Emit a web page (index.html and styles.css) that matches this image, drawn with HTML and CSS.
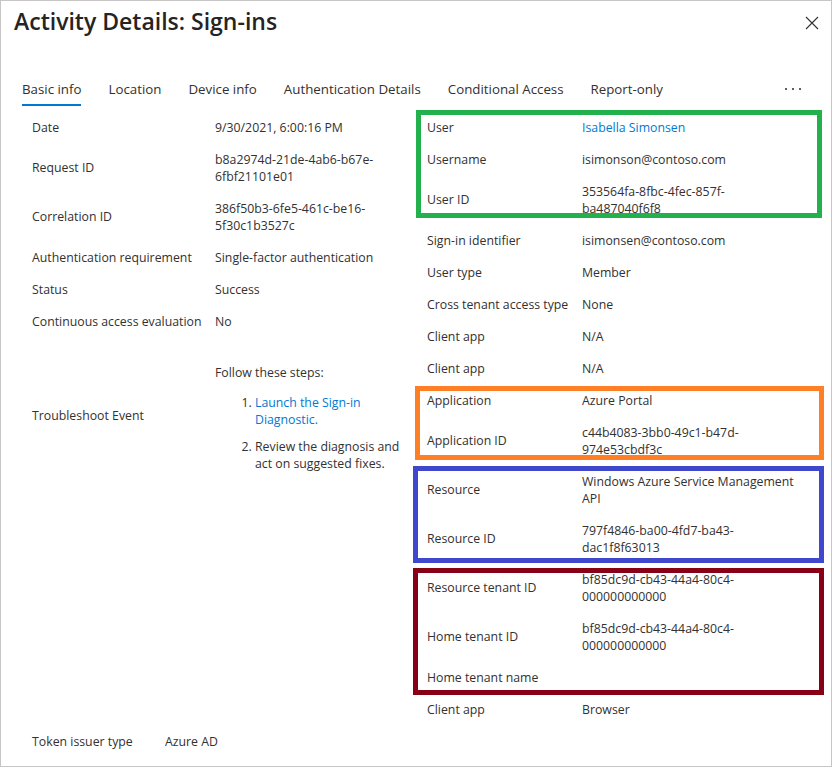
FILE: index.html
```html
<!DOCTYPE html>
<html>
<head>
<meta charset="utf-8">
<link rel="stylesheet" href="styles.css">
</head>
<body>
<div class="panel">
  <header class="header">
    <h1 class="title">Activity Details: Sign-ins</h1>
    <button class="close" aria-label="Close">
      <svg width="14" height="14" viewBox="0 0 14 14"><path d="M1 1L13 13M13 1L1 13" stroke="#323130" stroke-width="1.1" fill="none"/></svg>
    </button>
  </header>
  <nav class="tabs">
    <span class="tab active">Basic info</span>
    <span class="tab">Location</span>
    <span class="tab">Device info</span>
    <span class="tab">Authentication Details</span>
    <span class="tab">Conditional Access</span>
    <span class="tab">Report-only</span>
    <span class="more"><i></i><i></i><i></i></span>
  </nav>
  <div class="content">
    <div class="col left">
      <div class="row"><div class="label">Date</div><div class="value">9/30/2021, 6:00:16 PM</div></div>
      <div class="row"><div class="label">Request ID</div><div class="value">b8a2974d-21de-4ab6-b67e-<br>6fbf21101e01</div></div>
      <div class="row"><div class="label">Correlation ID</div><div class="value">386f50b3-6fe5-461c-be16-<br>5f30c1b3527c</div></div>
      <div class="row"><div class="label">Authentication requirement</div><div class="value">Single-factor authentication</div></div>
      <div class="row"><div class="label">Status</div><div class="value">Success</div></div>
      <div class="row"><div class="label">Continuous access evaluation</div><div class="value">No</div></div>
      <div class="row trouble">
        <div class="label">Troubleshoot Event</div>
        <div class="value">
          <p class="steps-intro">Follow these steps:</p>
          <ol class="steps">
            <li><a href="#" class="link">Launch the Sign-in<br>Diagnostic.</a></li>
            <li>Review the diagnosis and<br>act on suggested fixes.</li>
          </ol>
        </div>
      </div>
    </div>
    <div class="col right">
      <div class="group green">
        <div class="row"><div class="label">User</div><div class="value"><a href="#" class="link">Isabella Simonsen</a></div></div>
        <div class="row"><div class="label">Username</div><div class="value">isimonson@contoso.com</div></div>
        <div class="row"><div class="label">User ID</div><div class="value">353564fa-8fbc-4fec-857f-<br>ba487040f6f8</div></div>
      </div>
      <div class="row"><div class="label">Sign-in identifier</div><div class="value">isimonsen@contoso.com</div></div>
      <div class="row"><div class="label">User type</div><div class="value">Member</div></div>
      <div class="row"><div class="label">Cross tenant access type</div><div class="value">None</div></div>
      <div class="row"><div class="label">Client app</div><div class="value">N/A</div></div>
      <div class="row"><div class="label">Client app</div><div class="value">N/A</div></div>
      <div class="group orange">
        <div class="row"><div class="label">Application</div><div class="value">Azure Portal</div></div>
        <div class="row"><div class="label">Application ID</div><div class="value">c44b4083-3bb0-49c1-b47d-<br>974e53cbdf3c</div></div>
      </div>
      <div class="group blue">
        <div class="row"><div class="label">Resource</div><div class="value">Windows Azure Service Management<br>API</div></div>
        <div class="row"><div class="label">Resource ID</div><div class="value">797f4846-ba00-4fd7-ba43-<br>dac1f8f63013</div></div>
      </div>
      <div class="group red">
        <div class="row"><div class="label">Resource tenant ID</div><div class="value">bf85dc9d-cb43-44a4-80c4-<br>000000000000</div></div>
        <div class="row"><div class="label">Home tenant ID</div><div class="value">bf85dc9d-cb43-44a4-80c4-<br>000000000000</div></div>
        <div class="row"><div class="label">Home tenant name</div><div class="value"></div></div>
      </div>
      <div class="row"><div class="label">Client app</div><div class="value">Browser</div></div>
    </div>
  </div>
  <div class="row token"><div class="label">Token issuer type</div><div class="value">Azure AD</div></div>
</div>
</body>
</html>
```
FILE: styles.css
```css
* { box-sizing: border-box; }
html, body { margin: 0; padding: 0; background: #fff; }
body {
  font-family: "Open Sans", "Noto Sans", sans-serif;
  color: #323130;
  font-size: 12.3px;
}
.panel {
  width: 832px;
  height: 767px;
  border: 1px solid #c8c6c4;
  overflow: hidden;
}
.header {
  display: flex;
  justify-content: space-between;
  align-items: flex-start;
  padding: 4px 12px 0 13px;
  height: 70px;
}
.title {
  margin: 0;
  font-size: 23px;
  font-weight: 600;
  line-height: 32px;
  color: #252423;
}
.close {
  border: 0;
  background: none;
  padding: 0;
  margin-top: 11px;
  width: 14px;
  height: 14px;
  display: flex;
}
.tabs {
  display: flex;
  align-items: center;
  padding: 0 0 0 21px;
  height: 36px;
  font-size: 13.3px;
  position: relative;
}
.tab {
  margin-right: 27px;
  line-height: 36px;
  position: relative;
  color: #323130;
}
.tab.active::after {
  content: "";
  position: absolute;
  left: 0;
  right: 0;
  bottom: 1px;
  height: 2px;
  background: #0078d4;
}
.more {
  margin-left: auto;
  margin-right: 30px;
  display: flex;
  gap: 5px;
}
.more i {
  width: 2px;
  height: 2px;
  background: #605e5c;
  display: block;
}
.content {
  display: grid;
  grid-template-columns: 379px 395px;
  column-gap: 16px;
  padding-left: 31px;
  margin-top: 4px;
}
.row {
  display: grid;
  align-items: center;
  padding: 7.5px 0;
  line-height: 17px;
}
.left .row { grid-template-columns: 183px 1fr; }
.right .row { grid-template-columns: 155px 1fr; }
.value { min-height: 17px; }
.link { color: #0078d4; text-decoration: none; }
.trouble { padding-top: 27px; align-items: center; }
.trouble .label { margin-top: -6px; }
.steps-intro { margin: 0 0 13px; }
.steps {
  margin: 0;
  padding-left: 40px;
}
.steps li { margin-bottom: 10px; }
.steps li:last-child { margin-bottom: 0; }
.group { position: relative; }
.group::after {
  content: "";
  position: absolute;
  border: 5px solid;
  pointer-events: none;
}
.green::after { border-color: #22b14c; top: -1px; bottom: 6px; left: -11px; right: 0; }
.orange::after { border-color: #ff7f27; top: 2px; bottom: 5px; left: -12px; right: -2px; }
.blue::after { border-color: #3f48cc; top: 1px; bottom: 0; left: -14px; right: -2px; }
.red::after { border-color: #880015; top: 5px; bottom: -2px; left: -14px; right: -2px; }
.token {
  grid-template-columns: 133px 1fr;
  padding-left: 31px;
}
```
